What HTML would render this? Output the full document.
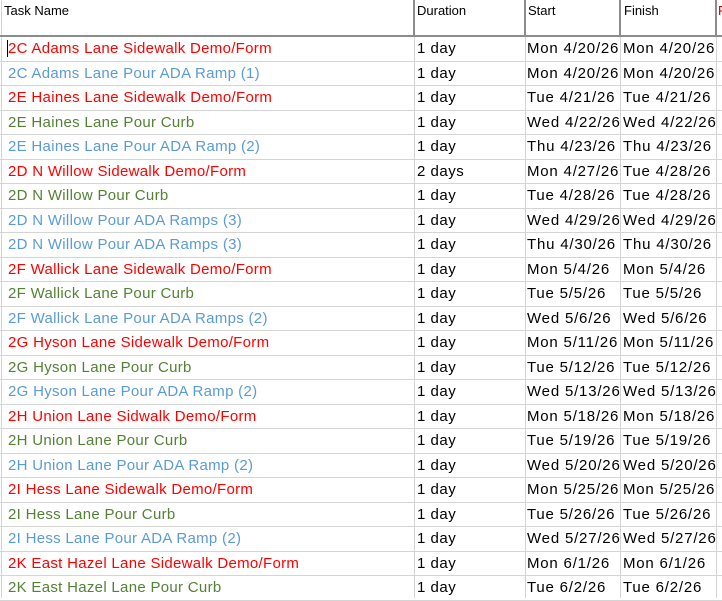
<!DOCTYPE html>
<html><head><style>
body{margin:0;width:722px;height:598px;overflow:hidden;background:#fff;font-family:"Liberation Sans",sans-serif;position:relative}
.h{position:absolute;top:3px;font-size:13px;color:#000}
.vl{position:absolute;top:0;height:598px;width:1px;background:#d4d4d4}
.hv{position:absolute;top:0;height:36px;width:2px;background:#8c8c8c}
.row{position:absolute;left:0;width:722px;height:24.5px;border-bottom:1px solid #d4d4d4;box-sizing:border-box;font-size:15px;line-height:24px}
.row span{position:absolute;top:0;white-space:nowrap}
.a{left:8px;letter-spacing:0.3px}.d{left:417px;color:#000;letter-spacing:0.5px}.s{left:527px;color:#000;letter-spacing:0.8px}.f{left:623px;color:#000;letter-spacing:0.8px}
.r{color:#ff0000}.b{color:#5b9bd5}.g{color:#548235}
</style></head><body>
<div class="vl" style="left:1px"></div>
<div class="vl" style="left:414px"></div>
<div class="vl" style="left:525px"></div>
<div class="vl" style="left:620px"></div>
<div class="vl" style="left:716px"></div>
<div class="hv" style="left:413px"></div>
<div class="hv" style="left:524px"></div>
<div class="hv" style="left:619px"></div>
<div class="hv" style="left:715px"></div>
<div style="position:absolute;left:0;top:35px;width:722px;height:2px;background:#8c8c8c"></div>
<div class="h" style="left:4px">Task Name</div>
<div class="h" style="left:417px">Duration</div>
<div class="h" style="left:528px">Start</div>
<div class="h" style="left:624px">Finish</div>
<div class="h" style="left:718px;color:#c00">F</div>
<div id="rows"></div>
<div style="position:absolute;left:7px;top:40px;width:1px;height:17px;background:#000"></div>
<script>
var d=[["r","2C Adams Lane Sidewalk Demo/Form","1 day","Mon 4/20/26","Mon 4/20/26"],
["b","2C Adams Lane Pour ADA Ramp (1)","1 day","Mon 4/20/26","Mon 4/20/26"],
["r","2E Haines Lane Sidewalk Demo/Form","1 day","Tue 4/21/26","Tue 4/21/26"],
["g","2E Haines Lane Pour Curb","1 day","Wed 4/22/26","Wed 4/22/26"],
["b","2E Haines Lane Pour ADA Ramp (2)","1 day","Thu 4/23/26","Thu 4/23/26"],
["r","2D N Willow Sidewalk Demo/Form","2 days","Mon 4/27/26","Tue 4/28/26"],
["g","2D N Willow Pour Curb","1 day","Tue 4/28/26","Tue 4/28/26"],
["b","2D N Willow Pour ADA Ramps (3)","1 day","Wed 4/29/26","Wed 4/29/26"],
["b","2D N Willow Pour ADA Ramps (3)","1 day","Thu 4/30/26","Thu 4/30/26"],
["r","2F Wallick Lane Sidewalk Demo/Form","1 day","Mon 5/4/26","Mon 5/4/26"],
["g","2F Wallick Lane Pour Curb","1 day","Tue 5/5/26","Tue 5/5/26"],
["b","2F Wallick Lane Pour ADA Ramps (2)","1 day","Wed 5/6/26","Wed 5/6/26"],
["r","2G Hyson Lane Sidewalk Demo/Form","1 day","Mon 5/11/26","Mon 5/11/26"],
["g","2G Hyson Lane Pour Curb","1 day","Tue 5/12/26","Tue 5/12/26"],
["b","2G Hyson Lane Pour ADA Ramp (2)","1 day","Wed 5/13/26","Wed 5/13/26"],
["r","2H Union Lane Sidwalk Demo/Form","1 day","Mon 5/18/26","Mon 5/18/26"],
["g","2H Union Lane Pour Curb","1 day","Tue 5/19/26","Tue 5/19/26"],
["b","2H Union Lane Pour ADA Ramp (2)","1 day","Wed 5/20/26","Wed 5/20/26"],
["r","2I Hess Lane Sidewalk Demo/Form","1 day","Mon 5/25/26","Mon 5/25/26"],
["g","2I Hess Lane Pour Curb","1 day","Tue 5/26/26","Tue 5/26/26"],
["b","2I Hess Lane Pour ADA Ramp (2)","1 day","Wed 5/27/26","Wed 5/27/26"],
["r","2K East Hazel Lane Sidewalk Demo/Form","1 day","Mon 6/1/26","Mon 6/1/26"],
["g","2K East Hazel Lane Pour Curb","1 day","Tue 6/2/26","Tue 6/2/26"]];
var h="";d.forEach(function(r,i){h+='<div class="row" style="top:'+(37+i*24.5)+'px"><span class="a '+r[0]+'">'+r[1]+'</span><span class="d">'+r[2]+'</span><span class="s">'+r[3]+'</span><span class="f">'+r[4]+'</span></div>';});
document.getElementById("rows").innerHTML=h;
</script>
</body></html>
